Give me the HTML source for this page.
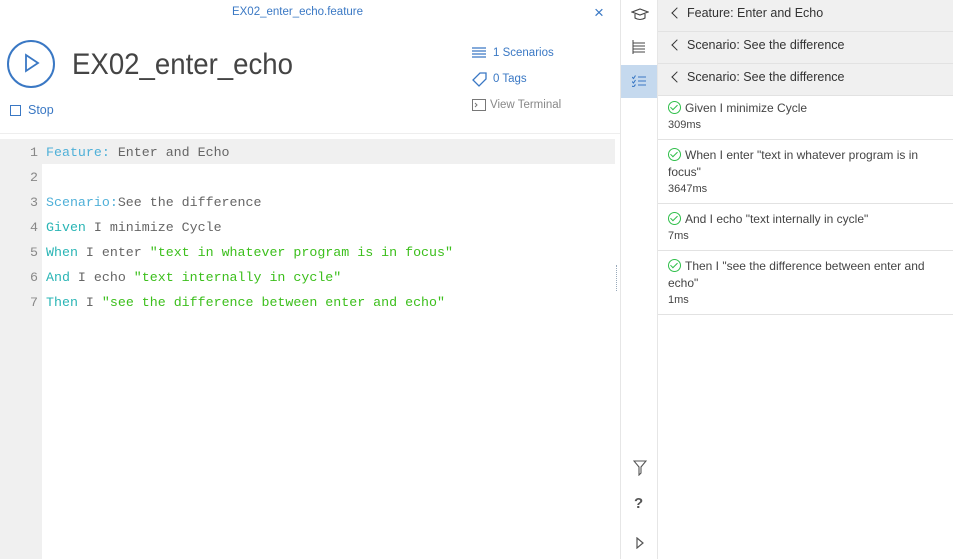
<!DOCTYPE html><html><head><style>
body{margin:0;width:953px;height:559px;overflow:hidden;background:#fff;font-family:"Liberation Sans",sans-serif;position:relative}
.a{position:absolute}
.code{font-family:"Liberation Mono",monospace;font-size:13.3px;color:#666;white-space:pre}
.ln{position:absolute;left:0;width:38px;text-align:right;font-family:"Liberation Mono",monospace;font-size:13.3px;color:#888}
.k{color:#4fb0d8}.kk{color:#2ab5b5}.s{color:#3cbf1c}
.hdr{position:absolute;left:658px;width:295px;height:31px;background:#f0f0f0;border-bottom:1px solid #e2e2e2;font-size:12.5px;color:#333;line-height:27px}
.hdr span{position:absolute;left:29px}
.chev{position:absolute;left:15px;top:9px;width:7px;height:7px;border-left:1.6px solid #333;border-bottom:1.6px solid #333;transform:rotate(45deg)}
.step{position:absolute;left:658px;width:295px;border-bottom:1px solid #e2e2e2;font-size:12px;color:#444;line-height:17px}
.step .t{padding:7px 10px 0 10px}
.step .m{padding:0 10px;font-size:11px;color:#444}
.ck{display:inline-block;width:11px;height:11px;border:1.4px solid #2fbf4a;border-radius:50%;vertical-align:-2px;margin-right:4px;position:relative}
.ck:after{content:"";position:absolute;left:3px;top:1px;width:3px;height:6px;border-right:1.5px solid #2fbf4a;border-bottom:1.5px solid #2fbf4a;transform:rotate(45deg)}
</style></head><body>
<div class="a" style="left:0;top:6px;width:595px;text-align:center;font-size:11.5px;color:#3a78c4">EX02_enter_echo.feature</div>
<div class="a" style="left:594px;top:3px;font-size:17px;color:#3a78c4">×</div>
<div class="a" style="left:7px;top:40px;width:44px;height:44px;border:2px solid #3a78c4;border-radius:50%"></div>
<svg class="a" style="left:24px;top:53px" width="16" height="20"><path d="M2 2 L14 10 L2 18 Z" fill="none" stroke="#3a78c4" stroke-width="1.8"/></svg>
<div class="a" style="left:72px;top:48px;font-size:30px;color:#444;transform:scaleX(0.92);transform-origin:left">EX02_enter_echo</div>
<div class="a" style="left:10px;top:105px;width:9px;height:9px;border:1.3px solid #3a78c4"></div>
<div class="a" style="left:28px;top:103px;font-size:12.5px;color:#3a78c4">Stop</div>
<svg class="a" style="left:472px;top:47px" width="16" height="12"><path d="M0 1h14M0 4h14M0 7h14M0 10h14" stroke="#3a78c4" stroke-width="1.2"/></svg>
<div class="a" style="left:493px;top:47px;font-size:11.5px;color:#3a78c4">1 Scenarios</div>
<svg class="a" style="left:472px;top:72px" width="16" height="16"><path d="M8 1h6v6l-7 7-6-6z" fill="none" stroke="#3a78c4" stroke-width="1.3"/></svg>
<div class="a" style="left:493px;top:73px;font-size:11.5px;color:#3a78c4">0 Tags</div>
<svg class="a" style="left:472px;top:99px" width="14" height="12"><rect x=".5" y=".5" width="13" height="11" fill="none" stroke="#777"/><path d="M3 4l2 2-2 2" fill="none" stroke="#777"/></svg>
<div class="a" style="left:490px;top:99px;font-size:11.5px;color:#888">View Terminal</div>
<div class="a" style="left:0;top:133px;width:620px;height:1px;background:#eee"></div>
<div class="a" style="left:0;top:139px;width:42px;height:420px;background:#f0f0f0"></div>
<div class="a" style="left:42px;top:139px;width:573px;height:25px;background:#f0f0f0"></div>
<div class="a" style="left:616px;top:265px;width:2px;height:26px;border-left:1px dotted #9ab"></div>
<div class="a" style="left:0;top:140px;line-height:25px">
<div class="ln" style="top:0">1</div><div class="ln" style="top:25px">2</div><div class="ln" style="top:50px">3</div><div class="ln" style="top:75px">4</div><div class="ln" style="top:100px">5</div><div class="ln" style="top:125px">6</div><div class="ln" style="top:150px">7</div>
<div class="code a" style="left:46px;top:0"><span class="k">Feature:</span> Enter and Echo

<span class="k">Scenario:</span>See the difference
<span class="kk">Given</span> I minimize Cycle
<span class="kk">When</span> I enter <span class="s">"text in whatever program is in focus"</span>
<span class="kk">And</span> I echo <span class="s">"text internally in cycle"</span>
<span class="kk">Then</span> I <span class="s">"see the difference between enter and echo"</span></div></div>
<div class="a" style="left:620px;top:0;width:1px;height:559px;background:#e6e6e6"></div>
<div class="a" style="left:657px;top:0;width:1px;height:559px;background:#e6e6e6"></div>
<div class="a" style="left:621px;top:65px;width:36px;height:33px;background:#c5d9ee"></div>
<svg class="a" style="left:631px;top:7px" width="18" height="14"><path d="M1 5l8-3 8 3-8 3z M4 7v4c3 2 7 2 10 0V7" fill="none" stroke="#444" stroke-width="1.1"/></svg>
<svg class="a" style="left:632px;top:40px" width="14" height="14"><path d="M1 0v14M1 3h12M1 6h12M1 9h12M1 12h12" stroke="#444" stroke-width="1"/></svg>
<svg class="a" style="left:632px;top:75px" width="14" height="12"><path d="M0 2l1.5 1.5 2-3M0 6.5l1.5 1.5 2-3M0 11l1.5 1 2-2.5M6 2h8M6 6h8M6 10h8" fill="none" stroke="#3a78c4" stroke-width="1.1"/></svg>
<svg class="a" style="left:633px;top:460px" width="14" height="16"><path d="M1 1h12l-5 6v6l-2 2V7z" fill="none" stroke="#555" stroke-width="1.1"/></svg>
<div class="a" style="left:634px;top:495px;font-size:15px;color:#555;font-weight:bold">?</div>
<svg class="a" style="left:636px;top:537px" width="8" height="12"><path d="M1 1l6 5-6 5z" fill="none" stroke="#555" stroke-width="1.2"/></svg>
<div class="hdr" style="top:0"><i class="chev"></i><span>Feature: Enter and Echo</span></div>
<div class="hdr" style="top:32px"><i class="chev"></i><span>Scenario: See the difference</span></div>
<div class="hdr" style="top:64px"><i class="chev"></i><span>Scenario: See the difference</span></div>
<div class="step" style="top:93px;height:46px"><div class="t"><i class="ck"></i>Given I minimize Cycle</div><div class="m">309ms</div></div>
<div class="step" style="top:140px;height:63px"><div class="t"><i class="ck"></i>When I enter "text in whatever program is in focus"</div><div class="m">3647ms</div></div>
<div class="step" style="top:204px;height:46px"><div class="t"><i class="ck"></i>And I echo "text internally in cycle"</div><div class="m">7ms</div></div>
<div class="step" style="top:251px;height:63px"><div class="t"><i class="ck"></i>Then I "see the difference between enter and echo"</div><div class="m">1ms</div></div>
</body></html>
